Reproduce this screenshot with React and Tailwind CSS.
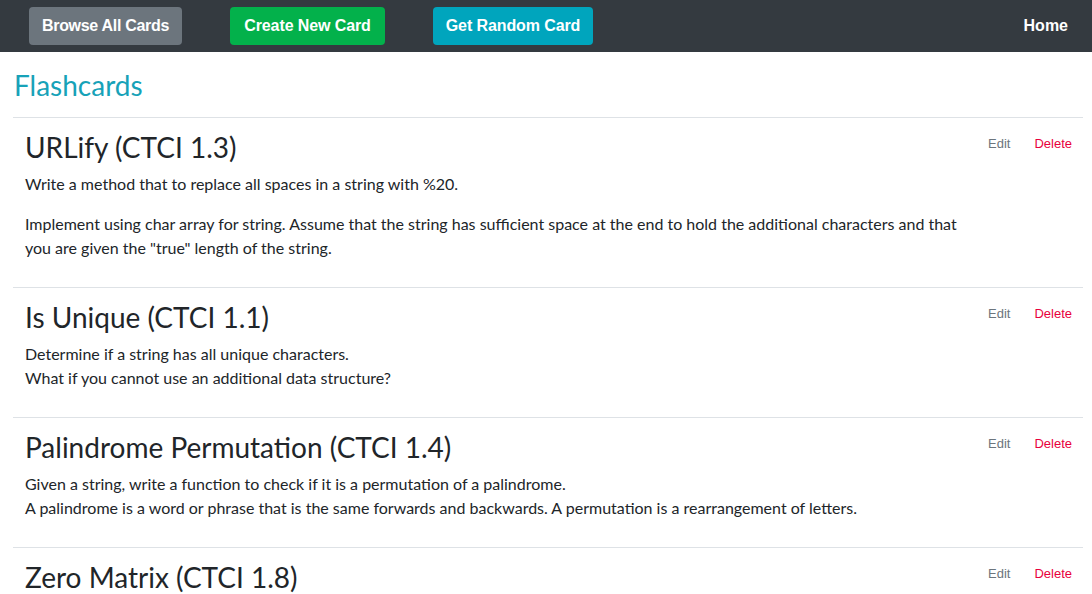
export default function App() {
  const cards = [
    {
      title: "URLify (CTCI 1.3)",
      paras: [
        ["Write a method that to replace all spaces in a string with %20."],
        [
          "Implement using char array for string. Assume that the string has sufficient space at the end to hold the additional characters and that you are given the \"true\" length of the string.",
        ],
      ],
    },
    {
      title: "Is Unique (CTCI 1.1)",
      paras: [["Determine if a string has all unique characters.", "What if you cannot use an additional data structure?"]],
    },
    {
      title: "Palindrome Permutation (CTCI 1.4)",
      paras: [
        [
          "Given a string, write a function to check if it is a permutation of a palindrome.",
          "A palindrome is a word or phrase that is the same forwards and backwards. A permutation is a rearrangement of letters.",
        ],
      ],
    },
    {
      title: "Zero Matrix (CTCI 1.8)",
      paras: [["Write an algorithm such that if an element in an MxN matrix is 0, its entire row and column are set to 0."]],
    },
  ];
  return (
    <div className="min-h-[594px] bg-white" style={{ fontFamily: "Lato, sans-serif" }}>
      <nav className="h-[52px] bg-[#343a40] flex items-center pl-[29px] pr-[24px]" style={{ fontFamily: "'Liberation Sans', Arial, sans-serif" }}>
        <div className="flex gap-[48px]">
          <button className="h-[38px] w-[153px] rounded-[4px] bg-[#6c757d] text-white text-[16px] font-bold tracking-[-0.3px]">Browse All Cards</button>
          <button className="h-[38px] w-[155px] rounded-[4px] bg-[#03b14b] text-white text-[16px] font-bold tracking-[-0.1px]">Create New Card</button>
          <button className="h-[38px] w-[160px] rounded-[4px] bg-[#00a5bd] text-white text-[16px] font-bold tracking-[-0.1px]">Get Random Card</button>
        </div>
        <div className="ml-auto text-white text-[16px] font-bold">Home</div>
      </nav>
      <div className="pl-[13px] pr-[9px]">
        <h1 className="text-[28px] leading-[34px] text-[#17a2b8] mt-[16px] mb-[15px] ml-px">Flashcards</h1>
        {cards.map((c, i) => (
          <div key={i} className="border-t border-[#dee2e6] pl-[12px] pr-[11px] pt-[12.5px] pb-[11px] flex">
            <div className="flex-1">
              <div className="max-w-[935px]">
                <h2 className="text-[28px] leading-[1.2] text-[#212529] mb-[8px]">{c.title}</h2>
                {c.paras.map((p, j) => (
                  <p key={j} className="text-[16px] leading-[24px] text-[#212529] mb-[16px]">
                    {p.map((line, k) => (
                      <span key={k}>
                        {line}
                        {k < p.length - 1 && <br />}
                      </span>
                    ))}
                  </p>
                ))}
              </div>
            </div>
            <div className="flex gap-[24px] pt-[5px] text-[13px] leading-[16px] h-fit" style={{ fontFamily: "'Liberation Sans', Arial, sans-serif" }}>
              <span className="text-[#6c757d]">Edit</span>
              <span className="text-[#e8003d]">Delete</span>
            </div>
          </div>
        ))}
      </div>
    </div>
  );
}
